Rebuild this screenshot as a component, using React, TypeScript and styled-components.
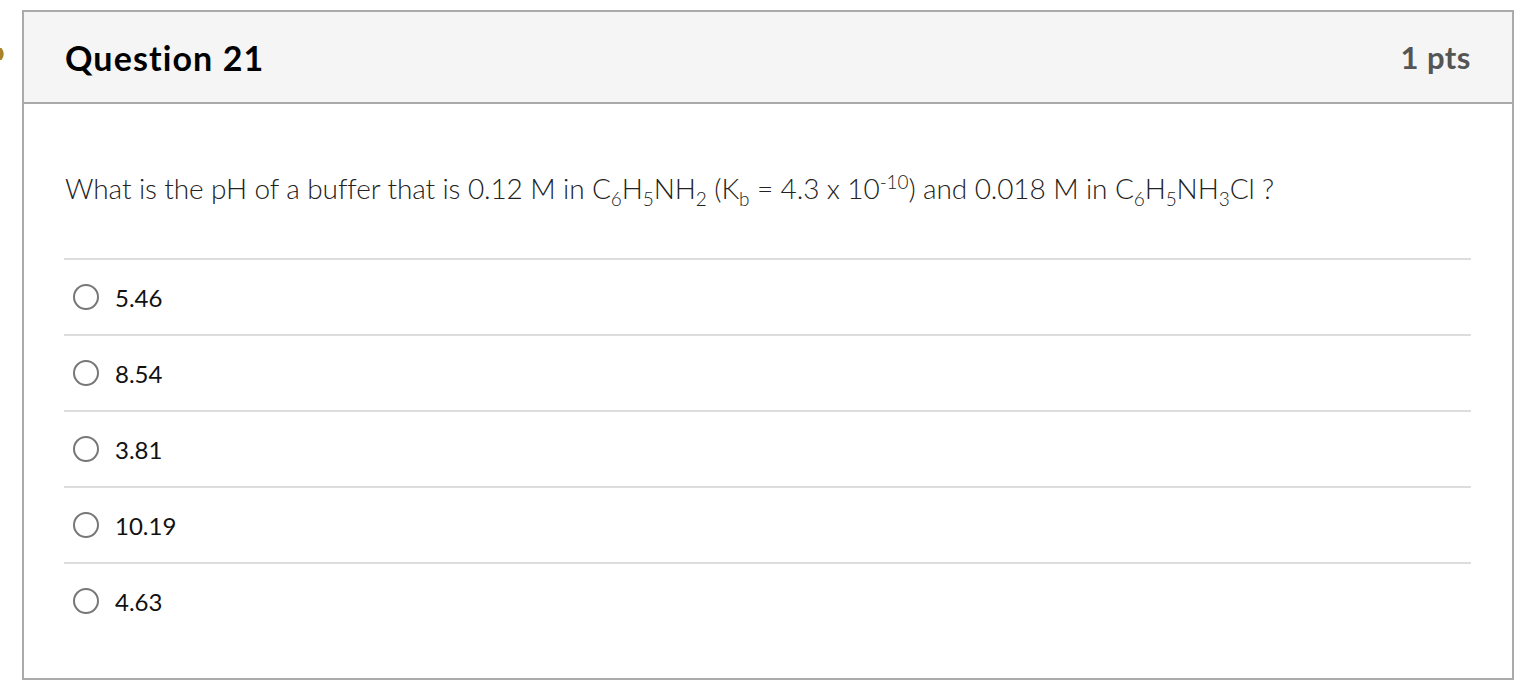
import styled, { createGlobalStyle } from 'styled-components'

const GlobalStyle = createGlobalStyle`
  html, body {
    margin: 0;
    padding: 0;
    background: #ffffff;
    font-family: Lato, "Noto Sans", sans-serif;
  }
`

const Page = styled.div`
  position: relative;
  padding: 10px 0 0 22px;
`

const Marker = styled.svg`
  position: absolute;
  left: 0;
  top: 47px;
`

const Card = styled.section`
  width: 1492px;
  box-sizing: border-box;
  border: 2px solid #aaaaaa;
  background: #ffffff;
`

const Header = styled.header`
  display: flex;
  align-items: center;
  justify-content: space-between;
  height: 90px;
  padding: 0 41px 0 41px;
  background: #f5f5f5;
  border-bottom: 2px solid #aaaaaa;
`

const Title = styled.h2`
  margin: 0;
  font-size: 34px;
  font-weight: 700;
  letter-spacing: 1.1px;
  color: #000000;
`

const Points = styled.span`
  font-size: 31px;
  font-weight: 700;
  letter-spacing: 0.5px;
  color: #555555;
`

const Body = styled.div`
  padding: 0 41px 40px 40px;
`

const QuestionText = styled.p`
  margin: 0;
  padding: 64px 0 50px 1px;
  font-size: 28px;
  font-weight: 300;
  letter-spacing: -0.1px;
  line-height: 40px;
  color: #222222;

  sub,
  sup {
    font-size: 19px;
    line-height: 0;
  }
`

const Answers = styled.ul`
  list-style: none;
  margin: 0;
  padding: 0;
`

const Answer = styled.li`
  display: flex;
  align-items: center;
  gap: 16px;
  height: 74px;
  padding-left: 9px;
  border-top: 2px solid #dddddd;
`

const Radio = styled.span`
  width: 22px;
  height: 22px;
  border: 2px solid #777777;
  border-radius: 50%;
  background: #ffffff;
`

const Label = styled.span`
  font-size: 24px;
  color: #111111;
`

const answers = ['5.46', '8.54', '3.81', '10.19', '4.63']

export default function App() {
  return (
    <Page>
      <GlobalStyle />
      <Marker width="6" height="14" viewBox="0 0 6 14">
        <path d="M0 1 L1.5 1 Q6 7 1.5 13 L0 13 Z" fill="#a8832a" />
      </Marker>
      <Card>
        <Header>
          <Title>Question 21</Title>
          <Points>1 pts</Points>
        </Header>
        <Body>
          <QuestionText>
            What is the pH of a buffer that is 0.12 M in C<sub>6</sub>H<sub>5</sub>NH<sub>2</sub> (K<sub>b</sub> = 4.3 x 10<sup>-10</sup>) and 0.018 M in C<sub>6</sub>H<sub>5</sub>NH<sub>3</sub>Cl ?
          </QuestionText>
          <Answers>
            {answers.map((a) => (
              <Answer key={a}>
                <Radio />
                <Label>{a}</Label>
              </Answer>
            ))}
          </Answers>
        </Body>
      </Card>
    </Page>
  )
}
